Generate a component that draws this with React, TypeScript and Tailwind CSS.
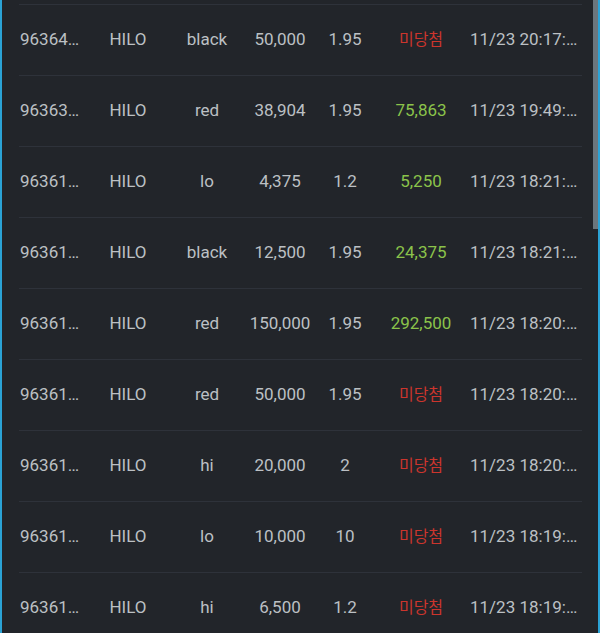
import React from 'react'

type Bet = {
  id: string
  game: string
  pick: string
  amount: string
  odds: string
  result: string | null
  time: string
}

// the list shows cut ids and times, as the app renders them
const bets: Bet[] = [
  { id: '96364…', game: 'HILO', pick: 'black', amount: '50,000', odds: '1.95', result: null, time: '11/23 20:17:…' },
  { id: '96363…', game: 'HILO', pick: 'red', amount: '38,904', odds: '1.95', result: '75,863', time: '11/23 19:49:…' },
  { id: '96361…', game: 'HILO', pick: 'lo', amount: '4,375', odds: '1.2', result: '5,250', time: '11/23 18:21:…' },
  { id: '96361…', game: 'HILO', pick: 'black', amount: '12,500', odds: '1.95', result: '24,375', time: '11/23 18:21:…' },
  { id: '96361…', game: 'HILO', pick: 'red', amount: '150,000', odds: '1.95', result: '292,500', time: '11/23 18:20:…' },
  { id: '96361…', game: 'HILO', pick: 'red', amount: '50,000', odds: '1.95', result: null, time: '11/23 18:20:…' },
  { id: '96361…', game: 'HILO', pick: 'hi', amount: '20,000', odds: '2', result: null, time: '11/23 18:20:…' },
  { id: '96361…', game: 'HILO', pick: 'lo', amount: '10,000', odds: '10', result: null, time: '11/23 18:19:…' },
  { id: '96361…', game: 'HILO', pick: 'hi', amount: '6,500', odds: '1.2', result: null, time: '11/23 18:19:…' },
]

const font = { fontFamily: "Roboto, 'Noto Sans CJK KR', sans-serif" }

function BetRow({ bet }: { bet: Bet }) {
  return (
    <div className="grid h-[71px] grid-cols-[71px_76px_82px_64px_66px_86px_118px] items-center border-t border-[#2e323a] text-[17px] text-[#bcc0c4]">
      <div className="pl-px whitespace-nowrap">{bet.id}</div>
      <div className="text-center">{bet.game}</div>
      <div className="text-center">{bet.pick}</div>
      <div className="text-center whitespace-nowrap">{bet.amount}</div>
      <div className="text-center">{bet.odds}</div>
      {bet.result ? (
        <div className="text-center text-[#8bc34a]">{bet.result}</div>
      ) : (
        <div className="text-center text-[16px] text-[#cc352d]">미당첨</div>
      )}
      <div className="pl-[6px] whitespace-nowrap">{bet.time}</div>
    </div>
  )
}

export default function App() {
  return (
    <div className="flex h-[633px] w-[600px] overflow-hidden bg-[#22252a]" style={font}>
      <div className="w-[2px] bg-[#2ba3d6]" />
      <div className="flex-1 overflow-hidden pt-[4px] pl-[17px] pr-[11px]">
        {bets.map((b, i) => (
          <BetRow key={i} bet={b} />
        ))}
      </div>
      {/* scrollbar */}
      <div className="w-[5px]">
        <div className="h-[229px] bg-[#6b767d]" />
      </div>
      <div className="w-[2px] bg-[#2ba3d6]" />
    </div>
  )
}
